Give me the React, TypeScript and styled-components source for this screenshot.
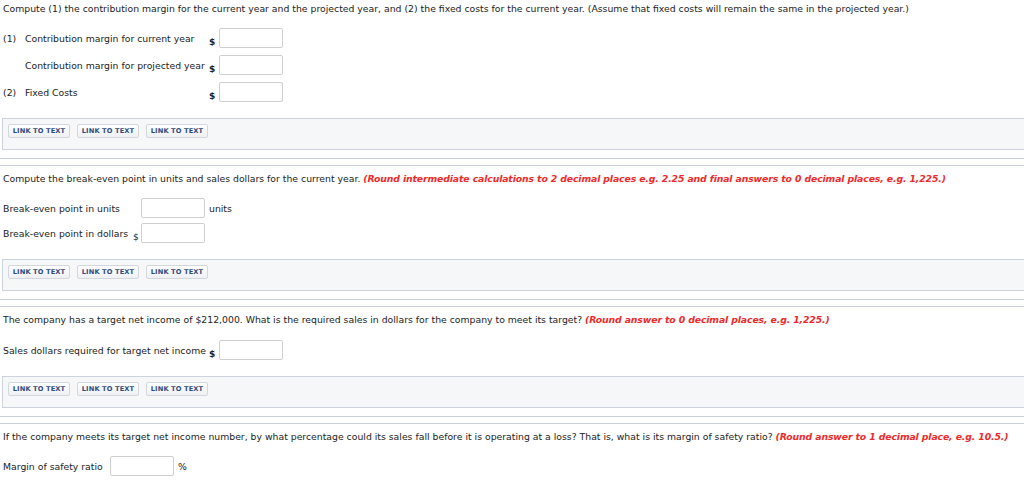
import React from "react";
import styled, { createGlobalStyle } from "styled-components";

const Global = createGlobalStyle`
  html, body { margin: 0; padding: 0; background: #fff; overflow: hidden; }
  body { font-family: "DejaVu Sans", Verdana, sans-serif; font-size: 9.3px; color: #222; }
`;

const Page = styled.div`
  padding-top: 2px;
  display: flex;
  flex-direction: column;
`;

const Section = styled.section`
  display: flex;
  flex-direction: column;
`;

const Question = styled.p<{ $top: number }>`
  margin: ${(p) => p.$top}px 0 0 3px;
  line-height: 14px;
  white-space: nowrap;
`;

const Hint = styled.span`
  color: #ee2a2a;
  font-weight: bold;
  font-style: italic;
  letter-spacing: -0.12px;
`;

const Rows = styled.div<{ $gap: number; $top: number }>`
  display: flex;
  flex-direction: column;
  gap: ${(p) => p.$gap}px;
  margin: ${(p) => p.$top}px 0 0 3px;
`;

const Row = styled.div<{ $label: number; $dollar: number }>`
  display: grid;
  grid-template-columns: ${(p) => p.$label}px ${(p) => p.$dollar}px 64px auto;
  align-items: center;
  height: 20px;
`;

const Label = styled.div`
  display: flex;
  white-space: nowrap;
`;

const Num = styled.span`
  width: 22px;
  flex: none;
`;

const Dollar = styled.span<{ $bold?: boolean }>`
  align-self: end;
  font-weight: ${(p) => (p.$bold ? "bold" : "normal")};
  line-height: 12px;
  font-size: 9px;
`;

const Field = styled.input`
  box-sizing: border-box;
  width: 64px;
  height: 20px;
  border: 1px solid #cfcfcf;
  border-radius: 2px;
  background: #fff;
  padding: 0 3px;
  font: inherit;
`;

const Unit = styled.span`
  padding-left: 4px;
`;

const LinkBar = styled.div<{ $top: number }>`
  margin: ${(p) => p.$top}px -10px 0 2px;
  height: 32px;
  border: 1px solid #cdd3dc;
  background: #f6f7f9;
  display: flex;
  align-items: flex-start;
  gap: 7px;
  padding: 5px 0 0 5px;
  box-sizing: border-box;
`;

const LinkButton = styled.button`
  width: 62px;
  height: 14px;
  padding: 0;
  border: 1px solid #d3d8df;
  border-radius: 2px;
  background: linear-gradient(#ffffff, #eef0f3);
  color: #2f4a7c;
  font-family: "DejaVu Sans", Verdana, sans-serif;
  font-weight: bold;
  font-size: 6.7px;
  letter-spacing: 0.1px;
  line-height: 12px;
`;

const Separator = styled.div`
  margin-top: 8px;
  height: 8px;
  box-sizing: border-box;
  border-top: 1px solid #c9cfd9;
  border-bottom: 1px solid #c9cfd9;
`;

const Links = ({ top }: { top: number }) => (
  <LinkBar $top={top}>
    <LinkButton>LINK TO TEXT</LinkButton>
    <LinkButton>LINK TO TEXT</LinkButton>
    <LinkButton>LINK TO TEXT</LinkButton>
  </LinkBar>
);

export default function App() {
  return (
    <>
      <Global />
      <Page>
        <Section>
          <Question $top={0}>
            Compute (1) the contribution margin for the current year and the projected year, and (2) the fixed costs for
            the current year. (Assume that fixed costs will remain the same in the projected year.)
          </Question>
          <Rows $gap={7} $top={12}>
            <Row $label={206} $dollar={10}>
              <Label>
                <Num>(1)</Num>Contribution margin for current year
              </Label>
              <Dollar $bold>$</Dollar>
              <Field />
            </Row>
            <Row $label={206} $dollar={10}>
              <Label>
                <Num />Contribution margin for projected year
              </Label>
              <Dollar $bold>$</Dollar>
              <Field />
            </Row>
            <Row $label={206} $dollar={10}>
              <Label>
                <Num>(2)</Num>Fixed Costs
              </Label>
              <Dollar $bold>$</Dollar>
              <Field />
            </Row>
          </Rows>
          <Links top={16} />
          <Separator />
        </Section>

        <Section>
          <Question $top={6}>
            Compute the break-even point in units and sales dollars for the current year.{" "}
            <Hint>
              (Round intermediate calculations to 2 decimal places e.g. 2.25 and final answers to 0 decimal places, e.g.
              1,225.)
            </Hint>
          </Question>
          <Rows $gap={5} $top={12}>
            <Row $label={130} $dollar={8}>
              <Label>Break-even point in units</Label>
              <span />
              <Field />
              <Unit>units</Unit>
            </Row>
            <Row $label={130} $dollar={8}>
              <Label>Break-even point in dollars</Label>
              <Dollar>$</Dollar>
              <Field />
            </Row>
          </Rows>
          <Links top={16} />
          <Separator />
        </Section>

        <Section>
          <Question $top={6}>
            The company has a target net income of $212,000. What is the required sales in dollars for the company to
            meet its target? <Hint>(Round answer to 0 decimal places, e.g. 1,225.)</Hint>
          </Question>
          <Rows $gap={7} $top={13}>
            <Row $label={206} $dollar={10}>
              <Label>Sales dollars required for target net income</Label>
              <Dollar $bold>$</Dollar>
              <Field />
            </Row>
          </Rows>
          <Links top={16} />
          <Separator />
        </Section>

        <Section>
          <Question $top={6}>
            If the company meets its target net income number, by what percentage could its sales fall before it is
            operating at a loss? That is, what is its margin of safety ratio?{" "}
            <Hint>(Round answer to 1 decimal place, e.g. 10.5.)</Hint>
          </Question>
          <Rows $gap={7} $top={12}>
            <Row $label={107} $dollar={0}>
              <Label>Margin of safety ratio</Label>
              <span />
              <Field />
              <Unit>%</Unit>
            </Row>
          </Rows>
        </Section>
      </Page>
    </>
  );
}
